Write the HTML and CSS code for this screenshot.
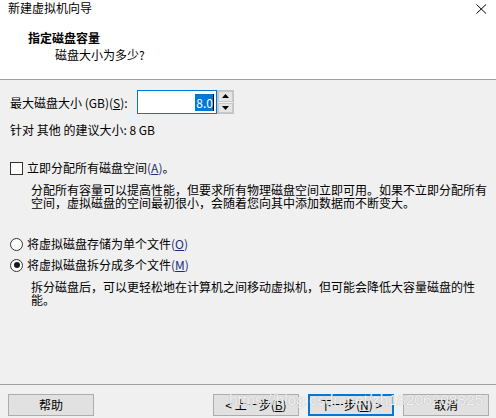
FILE: index.html
```html
<!DOCTYPE html>
<html lang="zh-CN">
<head>
<meta charset="utf-8">
<title>新建虚拟机向导</title>
<link rel="stylesheet" href="styles.css">
</head>
<body>
<div class="dialog">
  <div class="header">
    <div class="titlebar">
      <span class="title">新建虚拟机向导</span>
      <svg class="close" width="11" height="10" viewBox="0 0 11 10"><path d="M0.5 0.5 L10 9.5 M10 0.5 L0.5 9.5" stroke="#000" stroke-width="1" fill="none"/></svg>
    </div>
    <div class="h-title">指定磁盘容量</div>
    <div class="h-sub">磁盘大小为多少?</div>
  </div>

  <div class="content">
    <div class="size-row">
      <span class="size-label">最大磁盘大小 (GB)(<u>S</u>):</span>
      <div class="spin">
        <div class="spin-input"><span class="sel">8.0</span><span class="caret"></span></div>
        <div class="spin-btns">
          <div class="spin-btn"><svg width="7" height="4" viewBox="0 0 7 4"><path d="M3.5 0 L7 4 L0 4 Z" fill="#000"/></svg></div>
          <div class="spin-btn"><svg width="7" height="4" viewBox="0 0 7 4"><path d="M0 0 L7 0 L3.5 4 Z" fill="#000"/></svg></div>
        </div>
      </div>
    </div>
    <div class="recommend">针对 其他 的建议大小: 8 GB</div>

    <div class="option check-row">
      <span class="checkbox"></span>
      <span>立即分配所有磁盘空间<span class="mn">(<u>A</u>)</span>。</span>
    </div>
    <div class="desc">分配所有容量可以提高性能，但要求所有物理磁盘空间立即可用。如果不立即分配所有空间，虚拟磁盘的空间最初很小，会随着您向其中添加数据而不断变大。</div>

    <div class="option radio-row first">
      <span class="radio"></span>
      <span>将虚拟磁盘存储为单个文件<span class="mn">(<u>O</u>)</span></span>
    </div>
    <div class="option radio-row second">
      <span class="radio checked"></span>
      <span>将虚拟磁盘拆分成多个文件<span class="mn">(<u>M</u>)</span></span>
    </div>
    <div class="desc">拆分磁盘后，可以更轻松地在计算机之间移动虚拟机，但可能会降低大容量磁盘的性能。</div>
  </div>

  <div class="footer">
    <button class="btn">帮助</button>
    <div class="spacer"></div>
    <button class="btn">&lt; 上一步(<u>B</u>)</button>
    <button class="btn default">下一步(<u>N</u>) &gt;</button>
    <button class="btn">取消</button>
  </div>
  <div class="watermark">https://blog.csdn.net/zh18206208825</div>
</div>
</body>
</html>
```

FILE: styles.css
```css
html, body {
  margin: 0;
  padding: 0;
}
body {
  width: 496px;
  height: 418px;
  overflow: hidden;
  background: #f0f0f0;
  font-family: "Noto Sans CJK SC", "Microsoft YaHei", sans-serif;
  font-size: 12px;
  color: #000;
}
.dialog {
  position: relative;
  width: 496px;
  height: 418px;
  display: flex;
  flex-direction: column;
}
.header {
  background: #fff;
  height: 79px;
  border-bottom: 1px solid #a0a0a0;
  flex-shrink: 0;
}
.titlebar {
  display: flex;
  justify-content: space-between;
  align-items: center;
  height: 15px;
  padding: 0 9px 0 8px;
  line-height: 15px;
}
.close {
  display: block;
  margin-top: 2px;
}
.h-title {
  font-weight: bold;
  margin: 15px 0 0 28px;
  line-height: 16px;
}
.h-sub {
  margin: 1px 0 0 55px;
  line-height: 16px;
}
.content {
  flex: 1;
  padding: 10px 0 0 10px;
}
.size-row {
  display: flex;
  align-items: center;
  height: 24px;
}
.size-label {
  width: 127px;
  flex-shrink: 0;
}
.spin {
  display: flex;
  height: 24px;
}
.spin-input {
  width: 76px;
  height: 22px;
  border: 1px solid #0078d7;
  background: #fff;
  display: flex;
  justify-content: flex-end;
  align-items: center;
  padding-right: 2px;
}
.sel {
  background: #0078d7;
  color: #fff;
  line-height: 17px;
  padding: 0 0 0 1px;
}
.caret {
  width: 1px;
  height: 17px;
  background: #000;
}
.spin-btns {
  width: 15px;
  height: 22px;
  border: 1px solid #c4c4c4;
  background: #f0f0f0;
  display: flex;
  flex-direction: column;
  gap: 1px;
}
.spin-btn {
  flex: 1;
  background: #e5e5e5;
  border: 1px solid #c8c8c8;
  display: flex;
  align-items: center;
  justify-content: center;
}
.spin-btn svg {
  display: block;
}
.recommend {
  margin-top: 8px;
  line-height: 16px;
}
.option {
  display: flex;
  align-items: center;
  height: 16px;
  line-height: 16px;
}
.check-row {
  margin-top: 22px;
}
.checkbox {
  width: 11px;
  height: 11px;
  border: 1px solid #333;
  background: #fff;
  margin-right: 4px;
  flex-shrink: 0;
}
.mn {
  color: #1b2f78;
}
.desc {
  margin: 7px 0 0 21px;
  width: 460px;
  line-height: 13px;
}
.radio-row.first {
  margin-top: 27px;
}
.radio-row.second {
  margin-top: 5px;
}
.radio {
  width: 11px;
  height: 11px;
  border: 1px solid #333;
  border-radius: 50%;
  background: #fff;
  margin-right: 4px;
  flex-shrink: 0;
  display: flex;
  align-items: center;
  justify-content: center;
}
.radio.checked::after {
  content: "";
  width: 6px;
  height: 6px;
  border-radius: 50%;
  background: #1a1a1a;
}
.footer {
  flex-shrink: 0;
  height: 33px;
  border-top: 1px solid #a0a0a0;
  display: flex;
  align-items: flex-start;
  padding: 9px 7px 0 8px;
  box-sizing: border-box;
  height: 34px;
  gap: 9px;
}
.spacer {
  flex: 1;
}
.btn {
  width: 86px;
  height: 22px;
  margin: 0;
  padding: 0;
  border: 1px solid #adadad;
  background: #e1e1e1;
  font-family: "Noto Sans CJK SC", "Microsoft YaHei", sans-serif;
  font-size: 12px;
  color: #000;
  line-height: 18px;
}
.btn.default {
  border: 2px solid #0078d7;
}
.watermark {
  position: absolute;
  left: 229px;
  top: 391px;
  font-family: "Liberation Sans", Arial, sans-serif;
  font-size: 15.5px;
  line-height: 18px;
  color: rgba(255, 255, 255, 0.85);
  text-shadow: 0 0 1px rgba(120, 120, 120, 0.6);
  white-space: nowrap;
}
```
